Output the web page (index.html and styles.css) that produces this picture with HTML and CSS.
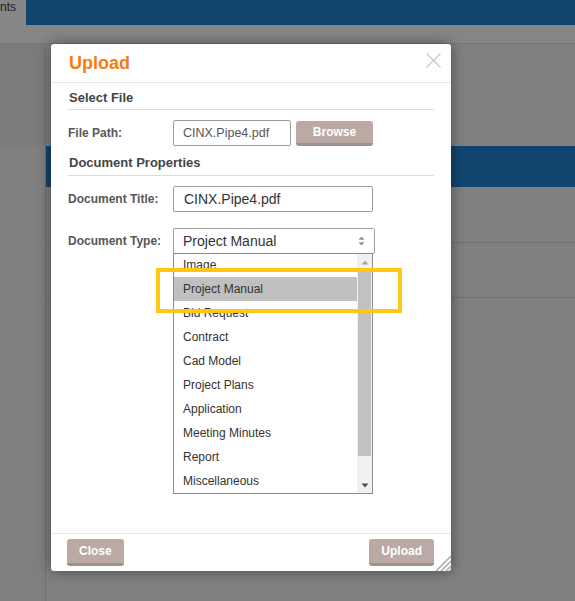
FILE: index.html
```html
<!DOCTYPE html>
<html>
<head>
<meta charset="utf-8">
<link rel="stylesheet" href="styles.css">
</head>
<body>
<div class="page">
  <div class="topbar">
    <div class="tab">nts</div>
    <div class="topfill"></div>
  </div>
  <div class="subbar"></div>
  <div class="main">
    <div class="side"><div class="side-top"></div></div>
    <div class="panel">
      <div class="panel-top"></div>
      <div class="panel-band"></div>
      <div class="panel-row"></div>
      <div class="panel-row short"></div>
    </div>
  </div>
</div>

<div class="modal">
  <div class="modal-header">
    <span class="modal-title">Upload</span>
    <svg class="close-x" width="15" height="15" viewBox="0 0 15 15"><path d="M0.5 0.5 L14.5 14.5 M14.5 0.5 L0.5 14.5" stroke="#c6c6c6" stroke-width="1.2" fill="none"/></svg>
  </div>
  <div class="modal-body">
    <div class="section-title">Select File</div>
    <div class="form-row first">
      <label class="label">File Path:</label>
      <div class="input small">CINX.Pipe4.pdf</div>
      <button class="btn browse">Browse</button>
    </div>
    <div class="section-title second">Document Properties</div>
    <div class="form-row title-row">
      <label class="label">Document Title:</label>
      <div class="input wide">CINX.Pipe4.pdf</div>
    </div>
    <div class="form-row type-row">
      <label class="label">Document Type:</label>
      <div class="select-wrap">
        <div class="select">
          <span>Project Manual</span>
          <svg class="sel-arrows" width="7" height="10" viewBox="0 0 7 10"><path d="M3.5 0.5 L6.5 3.8 L0.5 3.8 Z M0.5 6.2 L6.5 6.2 L3.5 9.5 Z" fill="#8e8e8e"/></svg>
        </div>
        <div class="dropdown">
          <ul class="options">
            <li>Image</li>
            <li class="selected">Project Manual</li>
            <li>Bid Request</li>
            <li>Contract</li>
            <li>Cad Model</li>
            <li>Project Plans</li>
            <li>Application</li>
            <li>Meeting Minutes</li>
            <li>Report</li>
            <li>Miscellaneous</li>
          </ul>
          <div class="scrollbar">
            <div class="sb-btn"><svg width="8" height="5" viewBox="0 0 8 5"><path d="M4 0.5 L7.5 4.5 L0.5 4.5 Z" fill="#a8a8a8"/></svg></div>
            <div class="sb-thumb"></div>
            <div class="sb-space"></div>
            <div class="sb-btn"><svg width="8" height="5" viewBox="0 0 8 5"><path d="M0.5 0.5 L7.5 0.5 L4 4.5 Z" fill="#505050"/></svg></div>
          </div>
        </div>
      </div>
    </div>
  </div>
  <div class="modal-footer">
    <button class="btn">Close</button>
    <button class="btn">Upload</button>
  </div>
  <svg class="grip" width="16" height="16" viewBox="0 0 16 16"><path d="M1 16 L16 1 M6 16 L16 6 M11 16 L16 11" stroke="#b0b0b0" stroke-width="1.6" fill="none"/></svg>
</div>

<div class="highlight"></div>
</body>
</html>
```

FILE: styles.css
```css
html, body {
  margin: 0;
  padding: 0;
}
body {
  width: 575px;
  height: 601px;
  overflow: hidden;
  position: relative;
  background: #7f7f7f;
  font-family: "Liberation Sans", Arial, sans-serif;
}
.page {
  display: flex;
  flex-direction: column;
  height: 601px;
}
.topbar {
  display: flex;
  height: 25px;
}
.tab {
  width: 26px;
  background: #878787;
  color: #1c1c1c;
  font-size: 12px;
  line-height: 14px;
  padding-top: 0;
  overflow: hidden;
  white-space: nowrap;
}
.topfill {
  flex: 1;
  background: #11456f;
}
.subbar {
  height: 18px;
  background: #868686;
  border-bottom: 1px solid #767676;
}
.main {
  flex: 1;
  display: flex;
}
.side {
  width: 45px;
  border-right: 1px solid #6f6f6f;
  background: #7f7f7f;
}
.side-top {
  height: 102px;
  background: #7b7b7b;
}
.panel {
  flex: 1;
  background: #808080;
}
.panel-top {
  height: 102px;
}
.panel-band {
  height: 41px;
  background: #11456f;
}
.panel-row {
  height: 55px;
  border-bottom: 1px solid #717171;
}
.panel-row.short {
  height: 54px;
}

/* modal */
.modal {
  position: absolute;
  left: 51px;
  top: 44px;
  width: 400px;
  height: 527px;
  background: #fff;
  border-radius: 3px;
  box-shadow: 0 0 14px rgba(0, 0, 0, 0.45);
  display: flex;
  flex-direction: column;
}
.modal-header {
  position: relative;
  height: 38px;
  border-bottom: 1px solid #e6e6e6;
  display: flex;
  align-items: center;
  padding-left: 18px;
}
.modal-title {
  color: #f47d0e;
  font-weight: bold;
  font-size: 18px;
}
.close-x {
  position: absolute;
  right: 10px;
  top: 9px;
}
.modal-body {
  flex: 1;
  padding: 0 17px;
}
.section-title {
  font-size: 13px;
  font-weight: bold;
  color: #454545;
  line-height: 17px;
  padding: 6px 1px 3px;
  border-bottom: 1px solid #dcdcdc;
}
.section-title.second {
  margin-top: 2px;
  padding-bottom: 4px;
}
.form-row {
  display: flex;
  align-items: center;
  height: 26px;
  margin-top: 10px;
}
.form-row.title-row {
  margin-top: 10px;
}
.form-row.type-row {
  margin-top: 16px;
  position: relative;
}
.label {
  width: 105px;
  font-size: 12px;
  font-weight: bold;
  color: #575757;
}
.input {
  box-sizing: border-box;
  height: 26px;
  border: 1px solid #9c9c9c;
  border-radius: 2px;
  display: flex;
  align-items: center;
}
.input.small {
  width: 118px;
  padding-left: 9px;
  font-size: 12.5px;
  color: #555;
}
.input.wide {
  width: 200px;
  padding-left: 10px;
  font-size: 14px;
  color: #333;
}
.btn {
  box-sizing: border-box;
  height: 27px;
  padding: 0 12px;
  background: #bbaaa3;
  border: none;
  border-bottom: 3px solid #9e918b;
  border-radius: 3px;
  color: #fff;
  font-family: "Liberation Sans", Arial, sans-serif;
  font-weight: bold;
  font-size: 12px;
}
.btn.browse {
  width: 77px;
  height: 25px;
  margin-left: 5px;
  align-self: flex-start;
  margin-top: 1px;
}
.select-wrap {
  position: relative;
}
.select {
  box-sizing: border-box;
  width: 202px;
  height: 26px;
  border: 1px solid #a2a2a2;
  border-radius: 2px;
  padding: 0 9px;
  display: flex;
  align-items: center;
  justify-content: space-between;
  font-size: 14px;
  color: #333;
}
.dropdown {
  position: absolute;
  left: 0;
  top: 25px;
  box-sizing: border-box;
  width: 200px;
  height: 241px;
  border: 1px solid #8c8c8c;
  background: #fff;
  display: flex;
  overflow: hidden;
  z-index: 2;
}
.options {
  list-style: none;
  margin: -1px 0 0;
  padding: 0;
  width: 183px;
}
.options li {
  height: 24px;
  line-height: 24px;
  padding-left: 9px;
  font-size: 12px;
  color: #333;
}
.options li.selected {
  background: #c0c0c0;
}
.scrollbar {
  flex: 1;
  background: #f1f1f1;
  display: flex;
  flex-direction: column;
}
.sb-btn {
  height: 16px;
  display: flex;
  align-items: center;
  justify-content: center;
}
.sb-thumb {
  height: 186px;
  margin: 0 1px;
  background: #c1c1c1;
}
.sb-space {
  flex: 1;
}
.modal-footer {
  height: 37px;
  border-top: 1px solid #e8e8e8;
  display: flex;
  justify-content: space-between;
  align-items: flex-start;
  padding: 5px 17px 0 16px;
  box-sizing: border-box;
  height: 38px;
}
.grip {
  position: absolute;
  right: 0;
  bottom: 0;
}
.highlight {
  position: absolute;
  left: 156px;
  top: 268px;
  width: 246px;
  height: 45px;
  box-sizing: border-box;
  border: 4px solid #ffc712;
  z-index: 5;
}
```
